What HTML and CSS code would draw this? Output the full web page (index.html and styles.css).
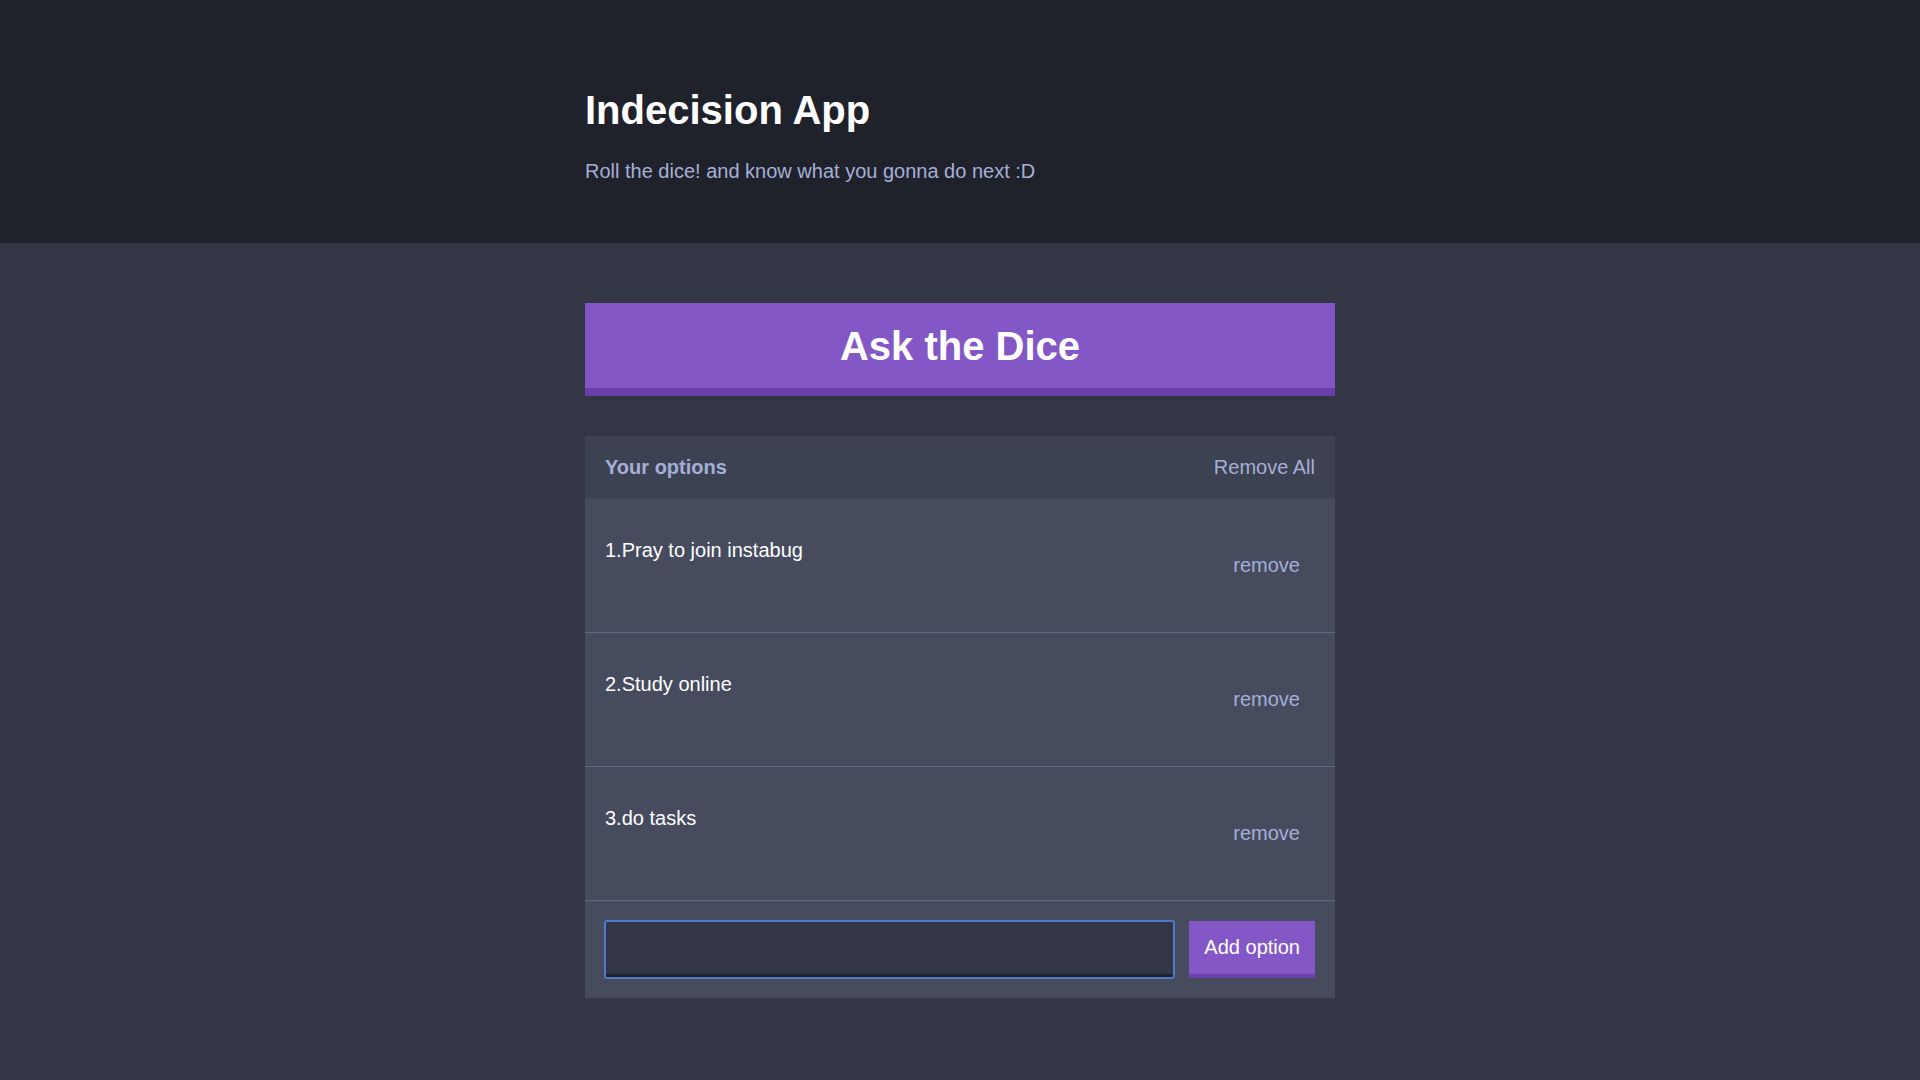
FILE: index.html
```html
<!DOCTYPE html>
<html lang="en">
<head>
<meta charset="utf-8">
<title>Indecision App</title>
<link rel="stylesheet" href="styles.css">
</head>
<body>
<header class="header">
  <div class="container">
    <h1 class="header__title">Indecision App</h1>
    <p class="header__subtitle">Roll the dice! and know what you gonna do next :D</p>
  </div>
</header>
<main class="container main">
  <button class="big-button">Ask the Dice</button>
  <section class="widget">
    <div class="widget-header">
      <h3 class="widget-header__title">Your options</h3>
      <button class="button-link button-link--flat">Remove All</button>
    </div>
    <div class="option">
      <p class="option__text">1.Pray to join instabug</p>
      <button class="button-link">remove</button>
    </div>
    <div class="option">
      <p class="option__text">2.Study online</p>
      <button class="button-link">remove</button>
    </div>
    <div class="option">
      <p class="option__text">3.do tasks</p>
      <button class="button-link">remove</button>
    </div>
    <form class="add-option">
      <input class="add-option__input" type="text" name="option">
      <button class="button" type="button">Add option</button>
    </form>
  </section>
</main>
</body>
</html>
```
FILE: styles.css
```css
* { box-sizing: border-box; }
html, body { margin: 0; padding: 0; }
body {
  background: #333745;
  font-family: "Liberation Sans", Arial, Helvetica, sans-serif;
  font-size: 20px;
  color: #ffffff;
}
.container {
  width: 750px;
  margin: 0 auto;
}
.header {
  background: #20222b;
  padding: 86px 0 60px;
}
.header__title {
  margin: 0 0 25px;
  font-size: 40px;
  line-height: 48px;
  font-weight: bold;
  color: #ffffff;
}
.header__subtitle {
  margin: 0;
  font-size: 20px;
  line-height: 24px;
  color: #a5afd7;
}
.main {
  padding-top: 60px;
}
.big-button {
  display: block;
  width: 100%;
  background: #8357c5;
  border: none;
  border-bottom: 8px solid #6b40ab;
  color: #ffffff;
  font-family: inherit;
  font-weight: bold;
  font-size: 40px;
  line-height: 45px;
  padding: 21px 20px 19px;
  margin: 0 0 40px;
}
.widget {
  background: #464b5e;
}
.widget-header {
  background: #3c4251;
  display: flex;
  justify-content: space-between;
  align-items: center;
  padding: 20px;
}
.widget-header__title {
  margin: 0;
  font-size: 20px;
  line-height: 23px;
  font-weight: bold;
  color: #a5afd7;
}
.button-link {
  background: none;
  border: none;
  color: #a5afd7;
  font-family: inherit;
  font-size: 20px;
  line-height: 23px;
  padding: 15px;
}
.button-link--flat {
  padding: 0;
}
.option {
  display: flex;
  justify-content: space-between;
  align-items: center;
  padding: 40px 20px;
  border-bottom: 1px solid #636a85;
}
.option__text {
  align-self: flex-start;
  margin: 0;
  font-size: 20px;
  line-height: 23px;
  color: #ffffff;
}
.add-option {
  display: flex;
  padding: 20px;
  margin: 0;
}
.add-option__input {
  flex: 1;
  height: 57px;
  margin-right: 15px;
  background: #333745;
  border: none;
  border-bottom: 4px solid #20222b;
  border-radius: 2px;
  outline: 2px solid #4a7bd0;
  outline-offset: -1px;
  color: #a5afd7;
  font-family: inherit;
  font-size: 20px;
  padding: 15px;
}
.button {
  background: #8357c5;
  border: none;
  border-bottom: 4px solid #6b40ab;
  color: #ffffff;
  font-family: inherit;
  font-size: 20px;
  line-height: 23px;
  padding: 15px;
}
```
